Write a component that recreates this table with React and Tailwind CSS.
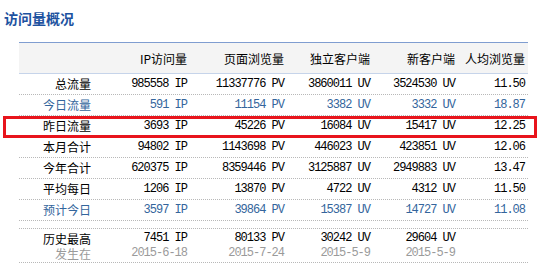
import React from 'react';

const rows = [
  { label: '总流量', ip: '985558', pv: '11337776', uv: '3860011', nuv: '3524530', avg: '11.50' },
  { label: '今日流量', ip: '591', pv: '11154', uv: '3382', nuv: '3332', avg: '18.87', blue: true },
  { label: '昨日流量', ip: '3693', pv: '45226', uv: '16084', nuv: '15417', avg: '12.25', mark: true },
  { label: '本月合计', ip: '94802', pv: '1143698', uv: '446023', nuv: '423851', avg: '12.06' },
  { label: '今年合计', ip: '620375', pv: '8359446', uv: '3125887', nuv: '2949883', avg: '13.47' },
  { label: '平均每日', ip: '1206', pv: '13870', uv: '4722', nuv: '4312', avg: '11.50' },
  { label: '预计今日', ip: '3597', pv: '39864', uv: '15387', nuv: '14727', avg: '11.08', blue: true },
];

const cols = 'grid grid-cols-[75px_96px_97px_86px_85px_70px]';
const cjk = "font-['Noto_Sans_CJK_SC',sans-serif]";
const mono = "font-['Liberation_Mono','Noto_Sans_CJK_SC',monospace] tracking-[-1px]";

function Num({ children }) {
  return <div className={`pr-[3px] text-right text-[12px] ${mono}`}>{children}</div>;
}

export default function App() {
  return (
    <div className={`w-[539px] h-[266px] bg-white overflow-hidden ${cjk}`}>
      <div className="h-[42px] pl-[4px] pt-[10px]">
        <h2 className="text-[14px] leading-[16px] font-bold text-[#1d52a0]">访问量概况</h2>
      </div>

      <div className="ml-[19px] w-[509px]">
        {/* header */}
        <div className={`${cols} h-[32px] items-center pt-[2px] bg-[#f4f4f4] border-t border-b border-t-[#7f9dd0] border-b-[#c6d4ea] text-[12px] text-black`}>
          <div />
          <div className="pr-[3px] text-right">IP访问量</div>
          <div className="pr-[3px] text-right">页面浏览量</div>
          <div className="pr-[3px] text-right">独立客户端</div>
          <div className="pr-[3px] text-right">新客户端</div>
          <div className="pr-[3px] text-right">人均浏览量</div>
        </div>

        {rows.map((r) => (
          <div
            key={r.label}
            className={`relative ${cols} h-[21px] items-center border-b border-dotted border-[#b8b8b8] ${r.blue ? 'text-[#33659c]' : 'text-black'}`}
          >
            <div className="pr-[3px] text-right text-[12px]">{r.label}</div>
            <Num>{r.ip} IP</Num>
            <Num>{r.pv} PV</Num>
            <Num>{r.uv} UV</Num>
            <Num>{r.nuv} UV</Num>
            <Num>{r.avg}</Num>
            {r.mark && (
              <div className="absolute left-[-16px] right-[-9px] top-0 bottom-[-2px] border-[3px] border-[#e8141c]" />
            )}
          </div>
        ))}

        <div className="h-[8px] border-b border-dotted border-[#b8b8b8]" />

        <div className={`${cols} h-[34px] content-center border-b border-dotted border-[#b8b8b8] leading-[15px]`}>
          <div className="pr-[3px] text-right text-[12px]">
            <div className="text-black">历史最高</div>
            <div className="text-[#9a9a9a]">发生在</div>
          </div>
          <div>
            <Num><span className="text-black">7451 IP</span></Num>
            <Num><span className="text-[#9a9a9a]">2015-6-18</span></Num>
          </div>
          <div>
            <Num><span className="text-black">80133 PV</span></Num>
            <Num><span className="text-[#9a9a9a]">2015-7-24</span></Num>
          </div>
          <div>
            <Num><span className="text-black">30242 UV</span></Num>
            <Num><span className="text-[#9a9a9a]">2015-5-9</span></Num>
          </div>
          <div>
            <Num><span className="text-black">29604 UV</span></Num>
            <Num><span className="text-[#9a9a9a]">2015-5-9</span></Num>
          </div>
          <div />
        </div>
      </div>
    </div>
  );
}
